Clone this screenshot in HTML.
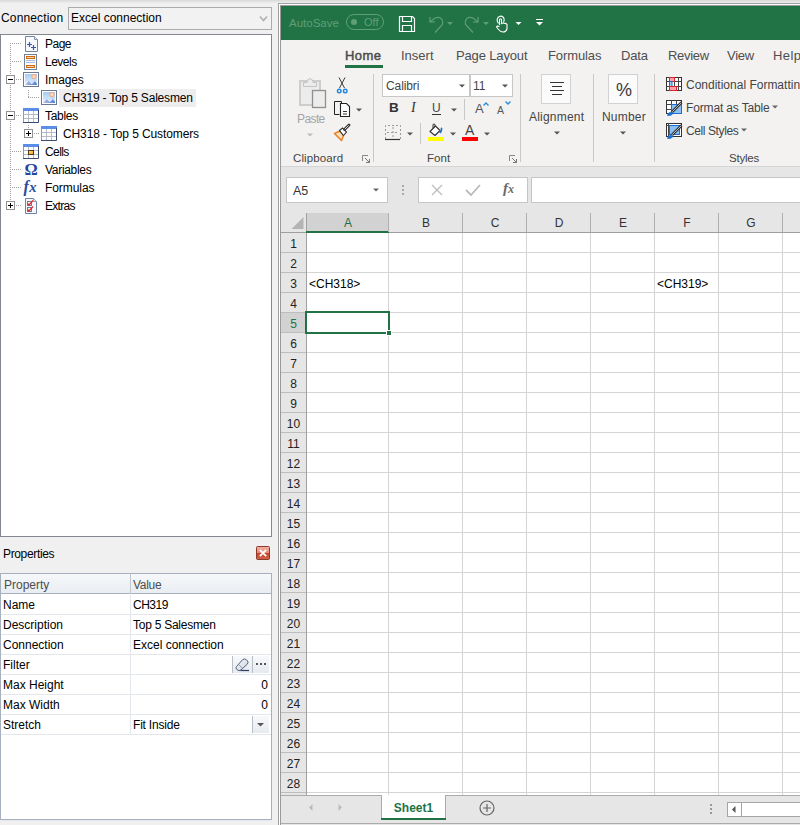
<!DOCTYPE html>
<html><head><meta charset="utf-8">
<style>
*{box-sizing:border-box;margin:0;padding:0}
html,body{width:800px;height:825px;overflow:hidden;background:#f0f0f0;font-family:"Liberation Sans",sans-serif;font-size:12px;color:#000;position:relative}
.a{position:absolute}
.t{position:absolute;white-space:nowrap;line-height:14px}
</style></head><body>
<!-- top gradient -->
<div class="a" style="left:0;top:0;width:800px;height:3px;background:linear-gradient(#d9d9d9,#ececec)"></div>

<!-- LEFT PANEL -->
<div class="t" style="left:1px;top:11px;letter-spacing:0.15px">Connection</div>
<div class="a" style="left:68px;top:7px;width:204px;height:23px;border:1px solid #acacac;background:#f2f2f2"></div>
<div class="t" style="left:71px;top:11px">Excel connection</div>
<svg class="a" style="left:259px;top:15px" width="10" height="8"><path d="M1 1.5L4.5 5.5L8 1.5" fill="none" stroke="#b0b0b0" stroke-width="1.6"/></svg>

<!-- tree -->
<div id="tree" class="a" style="left:0;top:34px;width:272px;height:503px;border:1px solid #828790;background:#fff"></div>

<div class="a" style="left:59px;top:89px;width:137px;height:18px;background:#ededed"></div>
<svg class="a" style="left:0;top:0" width="272" height="230"><line x1="10.5" y1="43" x2="10.5" y2="206" stroke="#a0a0a0" stroke-dasharray="1 1"/><line x1="28.5" y1="90" x2="28.5" y2="98" stroke="#a0a0a0" stroke-dasharray="1 1"/><line x1="28.5" y1="125" x2="28.5" y2="129" stroke="#a0a0a0" stroke-dasharray="1 1"/><line x1="10" y1="43.5" x2="21" y2="43.5" stroke="#a0a0a0" stroke-dasharray="1 1"/><g transform="translate(23,36)">
<path d="M2.5 0.5H11.5L14.5 3.5V15.5H2.5Z" fill="#f7f9fd" stroke="#71849f"/>
<path d="M11.5 0.5V3.5H14.5" fill="#dfe6f2" stroke="#8596b0"/>
<path d="M4 8.5H9M6.5 6V11M8 11.5H13M10.5 9V14" stroke="#3b58a8" stroke-width="1.2"/>
</g><line x1="10" y1="61.5" x2="21" y2="61.5" stroke="#a0a0a0" stroke-dasharray="1 1"/><g transform="translate(23,54)">
<rect x="1.5" y="0.5" width="12" height="15" fill="#f8fafd" stroke="#738299"/>
<rect x="3.5" y="2.5" width="8" height="2" fill="#f7d5a8" stroke="#d06a10" stroke-width="1"/>
<path d="M3 6.5H12M3 8.5H12" stroke="#aebbd8"/>
<rect x="3.5" y="11.5" width="8" height="2" fill="#f7d5a8" stroke="#d06a10" stroke-width="1"/>
</g><line x1="10" y1="79.5" x2="21" y2="79.5" stroke="#a0a0a0" stroke-dasharray="1 1"/><rect x="6.5" y="75.5" width="8" height="8" fill="#fff" stroke="#919191"/><path d="M8 79.5H13" stroke="#000"/><g transform="translate(23,72)">
<defs><linearGradient id="sky2372" x1="0" y1="0" x2="0" y2="1"><stop offset="0" stop-color="#a3cdf6"/><stop offset="1" stop-color="#e6f2fd"/></linearGradient>
<linearGradient id="mt2372" x1="0" y1="0" x2="1" y2="0"><stop offset="0" stop-color="#b5c3e6"/><stop offset="1" stop-color="#4f7ad6"/></linearGradient></defs>
<rect x="0.5" y="0.5" width="15" height="14" fill="#fff" stroke="#6a7a92"/>
<rect x="2" y="2" width="12" height="11" fill="url(#sky2372)"/>
<circle cx="11" cy="4.6" r="2.2" fill="#ffdcbc" stroke="#f8a27c" stroke-width="1"/>
<path d="M2 13L5 8.5L8.5 12L11.5 8.5L14 12V13Z" fill="url(#mt2372)"/>
<path d="M2.3 12.3L5 8.8M9 11.6L11.5 9" stroke="#fff" stroke-width="0.9"/>
</g><line x1="28" y1="97.5" x2="39" y2="97.5" stroke="#a0a0a0" stroke-dasharray="1 1"/><g transform="translate(41,90)">
<defs><linearGradient id="sky4190" x1="0" y1="0" x2="0" y2="1"><stop offset="0" stop-color="#a3cdf6"/><stop offset="1" stop-color="#e6f2fd"/></linearGradient>
<linearGradient id="mt4190" x1="0" y1="0" x2="1" y2="0"><stop offset="0" stop-color="#b5c3e6"/><stop offset="1" stop-color="#4f7ad6"/></linearGradient></defs>
<rect x="0.5" y="0.5" width="15" height="14" fill="#fff" stroke="#6a7a92"/>
<rect x="2" y="2" width="12" height="11" fill="url(#sky4190)"/>
<circle cx="11" cy="4.6" r="2.2" fill="#ffdcbc" stroke="#f8a27c" stroke-width="1"/>
<path d="M2 13L5 8.5L8.5 12L11.5 8.5L14 12V13Z" fill="url(#mt4190)"/>
<path d="M2.3 12.3L5 8.8M9 11.6L11.5 9" stroke="#fff" stroke-width="0.9"/>
</g><line x1="10" y1="115.5" x2="21" y2="115.5" stroke="#a0a0a0" stroke-dasharray="1 1"/><rect x="6.5" y="111.5" width="8" height="8" fill="#fff" stroke="#919191"/><path d="M8 115.5H13" stroke="#000"/><g transform="translate(23,108)">
<rect x="0.5" y="0.5" width="15" height="14" fill="#fff"/>
<path d="M1 6.5H15M1 10.5H15M5.5 3V14.5M10.5 3V14.5" stroke="#b4bcc8"/>
<rect x="0" y="0" width="16" height="3" fill="#5a8ee8"/>
<path d="M0.5 3V14.5" stroke="#8c9cb4"/>
<path d="M15.5 2V14.5H0" fill="none" stroke="#3a4c72"/>
</g><line x1="28" y1="133.5" x2="39" y2="133.5" stroke="#a0a0a0" stroke-dasharray="1 1"/><rect x="24.5" y="129.5" width="8" height="8" fill="#fff" stroke="#919191"/><path d="M26 133.5H31" stroke="#000"/><path d="M28.5 131V136" stroke="#000"/><g transform="translate(41,126)">
<rect x="0.5" y="0.5" width="15" height="14" fill="#fff"/>
<path d="M1 6.5H15M1 10.5H15M5.5 3V14.5M10.5 3V14.5" stroke="#b4bcc8"/>
<rect x="0" y="0" width="16" height="3" fill="#5a8ee8"/>
<path d="M0.5 3V14.5" stroke="#8c9cb4"/>
<path d="M15.5 2V14.5H0" fill="none" stroke="#3a4c72"/>
</g><line x1="10" y1="151.5" x2="21" y2="151.5" stroke="#a0a0a0" stroke-dasharray="1 1"/><g transform="translate(23,144)">
<rect x="0.5" y="0.5" width="15" height="14" fill="#fff"/>
<path d="M1 6.5H15M1 10.5H15M5.5 3V14.5M10.5 3V14.5" stroke="#b4bcc8"/>
<rect x="0" y="0" width="16" height="3" fill="#5a8ee8"/>
<path d="M0.5 3V14.5" stroke="#8c9cb4"/>
<path d="M15.5 2V14.5H0" fill="none" stroke="#3a4c72"/>
<defs><linearGradient id="cy" x1="0" y1="0" x2="1" y2="1"><stop offset="0" stop-color="#ffe27a"/><stop offset="1" stop-color="#f39a1e"/></linearGradient></defs><rect x="5.5" y="6.5" width="5" height="4" fill="url(#cy)" stroke="#4a3a18"/></g><line x1="10" y1="169.5" x2="21" y2="169.5" stroke="#a0a0a0" stroke-dasharray="1 1"/><text x="24.6" y="175" font-family="Liberation Serif" font-size="16.5" font-weight="bold" fill="#26479a" transform="translate(24.6,175) scale(1,0.95) translate(-24.6,-175)">&#937;</text><line x1="10" y1="187.5" x2="21" y2="187.5" stroke="#a0a0a0" stroke-dasharray="1 1"/><text x="23.5" y="192" font-family="Liberation Serif" font-size="16" font-style="italic" font-weight="bold" fill="#2a4c9c">f<tspan font-size="14.5" dx="0.5">x</tspan></text><line x1="10" y1="205.5" x2="21" y2="205.5" stroke="#a0a0a0" stroke-dasharray="1 1"/><rect x="6.5" y="201.5" width="8" height="8" fill="#fff" stroke="#919191"/><path d="M8 205.5H13" stroke="#000"/><path d="M10.5 203V208" stroke="#000"/><g transform="translate(23,198)">
<path d="M2.5 0.5H10.5L13.5 3.5V15.5H2.5Z" fill="#f4f7fc" stroke="#6d83a8"/>
<path d="M10.5 0.5V3.5H13.5" fill="#dfe6f2" stroke="#8fa1c0"/>
<rect x="4.5" y="3.5" width="4" height="4" fill="#fff" stroke="#6d7d99"/>
<rect x="4.5" y="9.5" width="4" height="4" fill="#fff" stroke="#6d7d99"/>
<path d="M4.5 5.5L6 7L10 2.5M4.5 11.5L6 13L10 8.5" stroke="#e0302a" stroke-width="1.3" fill="none"/>
</g></svg>
<div class="t" style="left:45px;top:37px;letter-spacing:-0.5px">Page</div>
<div class="t" style="left:45px;top:55px;letter-spacing:-0.5px">Levels</div>
<div class="t" style="left:45px;top:73px;letter-spacing:-0.1px">Images</div>
<div class="t" style="left:63px;top:91px;letter-spacing:-0.19px">CH319 - Top 5 Salesmen</div>
<div class="t" style="left:45px;top:109px;letter-spacing:-0.3px">Tables</div>
<div class="t" style="left:63px;top:127px;letter-spacing:-0.11px">CH318 - Top 5 Customers</div>
<div class="t" style="left:45px;top:145px;letter-spacing:-0.6px">Cells</div>
<div class="t" style="left:45px;top:163px;letter-spacing:-0.3px">Variables</div>
<div class="t" style="left:45px;top:181px;letter-spacing:-0.07px">Formulas</div>
<div class="t" style="left:45px;top:199px;letter-spacing:-0.7px">Extras</div>


<!-- properties grid -->
<div class="t" style="left:3px;top:547px;letter-spacing:-0.35px">Properties</div>
<svg class="a" style="left:256px;top:546px" width="14" height="14">
<defs><linearGradient id="cg" x1="0" y1="0" x2="0" y2="1"><stop offset="0" stop-color="#f2b0a4"/><stop offset="0.48" stop-color="#e48a78"/><stop offset="0.52" stop-color="#c9462c"/><stop offset="1" stop-color="#d2604a"/></linearGradient></defs>
<rect x="0.5" y="0.5" width="13" height="13" rx="1" fill="url(#cg)" stroke="#8a3b2e"/>
<path d="M3.8 3.8L10.2 10.2M10.2 3.8L3.8 10.2" stroke="#fff" stroke-width="1.7"/>
</svg>
<div class="a" style="left:0;top:573px;width:272px;height:247px;border:1px solid #a7b0bd;border-top-color:#a7b0bd;background:#fff"></div>
<div class="a" style="left:1px;top:574px;width:270px;height:20px;background:linear-gradient(#f6f8fa,#e9edf2);border-bottom:1px solid #a7b0bd"></div>
<div class="a" style="left:130px;top:574px;width:1px;height:20px;background:#c2c8d0"></div>
<div class="t" style="left:4px;top:578px;color:#4d4d4d">Property</div>
<div class="t" style="left:133px;top:578px;color:#4d4d4d;letter-spacing:-0.3px">Value</div>
<div class="a" style="left:1px;top:614px;width:270px;height:1px;background:#e3e6ea"></div>
<div class="a" style="left:130px;top:595px;width:1px;height:20px;background:#e3e6ea"></div>
<div class="t" style="left:3px;top:598px">Name</div>
<div class="t" style="left:133px;top:598px;letter-spacing:-0.5px">CH319</div>
<div class="a" style="left:1px;top:634px;width:270px;height:1px;background:#e3e6ea"></div>
<div class="a" style="left:130px;top:615px;width:1px;height:20px;background:#e3e6ea"></div>
<div class="t" style="left:3px;top:618px">Description</div>
<div class="t" style="left:133px;top:618px;letter-spacing:-0.25px">Top 5 Salesmen</div>
<div class="a" style="left:1px;top:654px;width:270px;height:1px;background:#e3e6ea"></div>
<div class="a" style="left:130px;top:635px;width:1px;height:20px;background:#e3e6ea"></div>
<div class="t" style="left:3px;top:638px">Connection</div>
<div class="t" style="left:133px;top:638px;letter-spacing:0px">Excel connection</div>
<div class="a" style="left:1px;top:674px;width:270px;height:1px;background:#e3e6ea"></div>
<div class="a" style="left:130px;top:655px;width:1px;height:20px;background:#e3e6ea"></div>
<div class="t" style="left:3px;top:658px">Filter</div>
<div class="a" style="left:1px;top:694px;width:270px;height:1px;background:#e3e6ea"></div>
<div class="a" style="left:130px;top:675px;width:1px;height:20px;background:#e3e6ea"></div>
<div class="t" style="left:3px;top:678px">Max Height</div>
<div class="t" style="left:200px;width:68px;text-align:right;top:678px">0</div>
<div class="a" style="left:1px;top:714px;width:270px;height:1px;background:#e3e6ea"></div>
<div class="a" style="left:130px;top:695px;width:1px;height:20px;background:#e3e6ea"></div>
<div class="t" style="left:3px;top:698px">Max Width</div>
<div class="t" style="left:200px;width:68px;text-align:right;top:698px">0</div>
<div class="a" style="left:1px;top:734px;width:270px;height:1px;background:#e3e6ea"></div>
<div class="a" style="left:130px;top:715px;width:1px;height:20px;background:#e3e6ea"></div>
<div class="t" style="left:3px;top:718px">Stretch</div>
<div class="t" style="left:133px;top:718px;letter-spacing:-0.2px">Fit Inside</div>
<div class="a" style="left:232px;top:656px;width:37px;height:17px;background:linear-gradient(#f8f9fb,#e6eaef)"></div>
<div class="a" style="left:232px;top:656px;width:1px;height:17px;background:#b8bec6"></div>
<div class="a" style="left:252px;top:656px;width:1px;height:17px;background:#b8bec6"></div>
<svg class="a" style="left:234px;top:657px" width="17" height="15">
<defs><linearGradient id="er" x1="0" y1="0" x2="1" y2="1"><stop offset="0" stop-color="#fbfcfd"/><stop offset="1" stop-color="#c8d0dc"/></linearGradient></defs>
<path d="M2.5 9.5L8.5 2.8Q10.5 1 12.5 2.8L13.2 3.5Q15 5.5 13.2 7.3L7 13Q5 14.5 3.2 12.8L2.8 12.3Q1.2 10.8 2.5 9.5Z" fill="url(#er)" stroke="#505e7a"/>
<path d="M4.5 7.5L8.8 11.5" stroke="#7a869c" stroke-width="0.8"/>
<path d="M6.5 13.5H15" stroke="#2e3e66" stroke-width="1.2"/>
</svg>
<div class="a" style="left:256px;top:663px;width:2px;height:2px;background:#555"></div>
<div class="a" style="left:260px;top:663px;width:2px;height:2px;background:#555"></div>
<div class="a" style="left:264px;top:663px;width:2px;height:2px;background:#555"></div>

<div class="a" style="left:252px;top:716px;width:17px;height:17px;background:linear-gradient(#f8f9fb,#e6eaef);border-left:1px solid #b8bec6"></div>
<svg class="a" style="left:252px;top:716px" width="17" height="17"><path d="M5 7H12L8.5 10.5Z" fill="#555"/></svg>
<div class="a" style="left:0;top:820px;width:272px;height:1px;background:#e4e8ee"></div>

<!-- RIGHT: EXCEL -->
<div class="a" style="left:278px;top:3px;width:522px;height:822px;border-left:1px solid #a0a0a0;border-top:1px solid #a0a0a0;background:#fff"></div>
<div class="a" style="left:280px;top:5px;width:520px;height:820px;border-left:1px solid #9a9a9a;border-top:1px solid #9a9a9a;background:#f3f2f1"></div>
<div class="a" style="left:281px;top:6px;width:519px;height:34px;background:#217346"></div>
<div class="t" style="left:289px;top:16px;font-size:11.5px;color:#5f9f78">AutoSave</div>
<div class="a" style="left:346px;top:14px;width:38px;height:16px;border:1px solid #5f9f78;border-radius:8px"></div>
<div class="a" style="left:351px;top:19px;width:6px;height:6px;border-radius:3px;background:#5f9f78"></div>
<div class="t" style="left:364px;top:15px;font-size:11px;color:#5f9f78">Off</div>
<svg class="a" style="left:398px;top:15px" width="18" height="18">
<path d="M1.5 1.5H14.5L16.5 3.5V16.5H1.5Z" fill="none" stroke="#fff" stroke-width="1.2"/>
<path d="M4.5 1.5V6.5H13.5V1.5" fill="none" stroke="#fff" stroke-width="1.2"/>
<path d="M4.5 16.5V10.5H13.5V16.5" fill="none" stroke="#fff" stroke-width="1.2"/>
</svg>
<svg class="a" style="left:426px;top:14px" width="30" height="20">
<path d="M4 3V8H9" fill="none" stroke="#5f9f78" stroke-width="1.2"/>
<path d="M4.5 8Q9 2.5 13.5 3.5Q17.5 5.5 16.5 10.5L9 18.5" fill="none" stroke="#5f9f78" stroke-width="1.2"/>
<path d="M21 8H27L24 11Z" fill="#5f9f78"/>
</svg>
<svg class="a" style="left:462px;top:14px" width="30" height="20">
<path d="M16 3V8H11" fill="none" stroke="#5f9f78" stroke-width="1.2"/>
<path d="M15.5 8Q11 2.5 6.5 3.5Q2.5 5.5 3.5 10.5L11 18.5" fill="none" stroke="#5f9f78" stroke-width="1.2"/>
<path d="M21 8H27L24 11Z" fill="#5f9f78"/>
</svg>
<svg class="a" style="left:494px;top:14px" width="30" height="20">
<path d="M4.5 9.5Q2 6 4 3.5Q6.5 1 9 3Q11 5 9.5 8.5" fill="none" stroke="#fff" stroke-width="1.1"/>
<path d="M5.5 11V5.5Q6.5 4 7.5 5.5V9.5Q9 8.5 10.5 9.5Q12 9 13 10.5V15Q12 18 9 18Q6.5 18 4.5 15.5L2.5 13Q3 11.5 5.5 12.5" fill="none" stroke="#fff" stroke-width="1.1"/>
<path d="M21.5 8H27.5L24.5 11Z" fill="#fff"/>
</svg>
<svg class="a" style="left:534px;top:16px" width="12" height="14">
<path d="M2 3.5H9" stroke="#fff" stroke-width="1"/>
<path d="M2 6H9L5.5 9.5Z" fill="#fff"/>
</svg>
<div class="t" style="left:345px;top:48px;font-size:13px;line-height:15px;color:#4a4a4a;letter-spacing:0.4px;-webkit-text-stroke:0.45px #4a4a4a;">Home</div>
<div class="t" style="left:401px;top:48px;font-size:13px;line-height:15px;color:#4e4e4e;letter-spacing:0px;">Insert</div>
<div class="t" style="left:456px;top:48px;font-size:13px;line-height:15px;color:#4e4e4e;letter-spacing:-0.15px;">Page Layout</div>
<div class="t" style="left:548px;top:48px;font-size:13px;line-height:15px;color:#4e4e4e;letter-spacing:-0.1px;">Formulas</div>
<div class="t" style="left:621px;top:48px;font-size:13px;line-height:15px;color:#4e4e4e;letter-spacing:-0.2px;">Data</div>
<div class="t" style="left:668px;top:48px;font-size:13px;line-height:15px;color:#4e4e4e;letter-spacing:-0.3px;">Review</div>
<div class="t" style="left:727px;top:48px;font-size:13px;line-height:15px;color:#4e4e4e;letter-spacing:-0.3px;">View</div>
<div class="t" style="left:773px;top:48px;font-size:13px;line-height:15px;color:#4e4e4e;letter-spacing:0.4px;">Help</div>
<div class="a" style="left:345px;top:65px;width:38px;height:3px;background:#217346"></div>
<div class="a" style="left:373px;top:74px;width:1px;height:88px;background:#c8c8c8"></div>
<div class="a" style="left:520px;top:74px;width:1px;height:88px;background:#c8c8c8"></div>
<div class="a" style="left:593px;top:74px;width:1px;height:88px;background:#c8c8c8"></div>
<div class="a" style="left:654px;top:74px;width:1px;height:88px;background:#c8c8c8"></div>
<div class="a" style="left:281px;top:166px;width:519px;height:1px;background:#d4d4d4"></div>
<div class="t" style="left:293px;top:151px;font-size:11.5px;color:#444;letter-spacing:0.1px">Clipboard</div>
<div class="t" style="left:427px;top:151px;font-size:11.5px;color:#444;letter-spacing:0.1px">Font</div>
<div class="t" style="left:729px;top:151px;font-size:11.5px;color:#444;letter-spacing:-0.2px">Styles</div>
<svg class="a" style="left:362px;top:155px" width="9" height="9"><path d="M0.5 6V0.5H6" fill="none" stroke="#888"/><path d="M3 3L7.5 7.5M4 7.5H7.5V4" fill="none" stroke="#777"/></svg>
<svg class="a" style="left:509px;top:155px" width="9" height="9"><path d="M0.5 6V0.5H6" fill="none" stroke="#888"/><path d="M3 3L7.5 7.5M4 7.5H7.5V4" fill="none" stroke="#777"/></svg>
<svg class="a" style="left:298px;top:77px" width="30" height="32">
<rect x="2" y="4" width="20" height="24" fill="#ececec" stroke="#cdcdcd" stroke-width="2"/>
<path d="M5.5 9.5V5.5H9Q9 2 12 1.5Q15 2 15 5.5H18.5V9.5Z" fill="#ececec" stroke="#c4c4c4"/>
<rect x="14.5" y="13.5" width="13" height="17" fill="#ececec" stroke="#8f8f8f" stroke-width="1.3"/>
</svg>
<div class="t" style="left:297px;top:112px;color:#a5a5a5;letter-spacing:-0.6px">Paste</div>
<svg class="a" style="left:307px;top:133px" width="6" height="4"><path d="M0 0.5H6L3.0 3.5Z" fill="#bbb"/></svg>
<svg class="a" style="left:335px;top:76px" width="14" height="18">
<path d="M4 1.5L9.5 12M10 1.5L4.5 12" stroke="#3a3a3a" stroke-width="1"/>
<circle cx="4.2" cy="15" r="1.8" fill="none" stroke="#1e88e0" stroke-width="1.4"/>
<circle cx="10.2" cy="15" r="1.8" fill="none" stroke="#1e88e0" stroke-width="1.4"/>
</svg>
<svg class="a" style="left:333px;top:100px" width="30" height="19">
<path d="M8.5 3.5V1.5H1.5V14.5H6.5" fill="none" stroke="#222" stroke-width="1"/>
<path d="M7.5 3.5H13.5L16.5 6.5V16.5H7.5Z" fill="#fff" stroke="#222" stroke-width="1.1"/>
<path d="M10 11.5H14M10 14H14" stroke="#333"/>
</svg>
<svg class="a" style="left:356px;top:108px" width="6" height="4"><path d="M0 0.5H6L3.0 3.5Z" fill="#555"/></svg>
<svg class="a" style="left:333px;top:123px" width="18" height="19">
<path d="M1.5 10.5L7 8L10.5 12.5L8.5 17.5Z" fill="#fbe0c0" stroke="#e8832a" stroke-width="1.6" stroke-linejoin="round"/>
<path d="M6.5 7.5L9.5 5L13.5 9L10.5 12.5Z" fill="#fff" stroke="#333" stroke-width="1.1"/>
<path d="M11.5 6.5L16 2" stroke="#333" stroke-width="2.8" stroke-linecap="round"/>
<path d="M11.8 6.2L15.6 2.4" stroke="#f3f2f1" stroke-width="0.9"/>
</svg>
<div class="a" style="left:382px;top:74px;width:88px;height:23px;background:#fff;border:1px solid #c6c6c6"></div>
<div class="a" style="left:470px;top:74px;width:43px;height:23px;background:#fff;border:1px solid #c6c6c6"></div>
<div class="t" style="left:386px;top:79px;color:#444;letter-spacing:-0.1px">Calibri</div>
<div class="t" style="left:473px;top:79px;color:#444">11</div>
<svg class="a" style="left:459px;top:84px" width="6" height="4"><path d="M0 0.5H6L3.0 3.5Z" fill="#555"/></svg>
<svg class="a" style="left:502px;top:84px" width="6" height="4"><path d="M0 0.5H6L3.0 3.5Z" fill="#555"/></svg>
<div class="t" style="left:389px;top:101px;font-weight:bold;font-size:13.5px;color:#333">B</div>
<div class="t" style="left:411px;top:101px;font-style:italic;font-size:14px;color:#333;font-family:'Liberation Serif'">I</div>
<div class="t" style="left:432px;top:101px;font-size:12px;color:#444">U</div>
<div class="a" style="left:432px;top:114px;width:9px;height:1px;background:#333"></div>
<svg class="a" style="left:451px;top:108px" width="6" height="4"><path d="M0 0.5H6L3.0 3.5Z" fill="#555"/></svg>
<div class="a" style="left:464px;top:99px;width:1px;height:21px;background:#c8c8c8"></div>
<div class="t" style="left:475px;top:102px;font-size:13px;color:#555">A</div>
<svg class="a" style="left:483px;top:102px" width="6" height="4"><path d="M0.5 3.5L3 1L5.5 3.5" fill="none" stroke="#2a8ad8" stroke-width="1.3"/></svg>
<div class="t" style="left:497px;top:103px;font-size:10.5px;color:#555">A</div>
<svg class="a" style="left:505px;top:101px" width="6" height="4"><path d="M0.5 0.5L3 3L5.5 0.5" fill="none" stroke="#2a8ad8" stroke-width="1.3"/></svg>
<svg class="a" style="left:385px;top:125px" width="16" height="16">
<path d="M0.5 14V0.5H15.5V14" fill="none" stroke="#9a9a9a" stroke-dasharray="2 2"/>
<path d="M8 2V13M2 7.5H14" stroke="#9a9a9a" stroke-dasharray="2 2"/>
<path d="M0 14.5H15" stroke="#333" stroke-width="1.2"/>
</svg>
<svg class="a" style="left:407px;top:132px" width="6" height="4"><path d="M0 0.5H6L3.0 3.5Z" fill="#555"/></svg>
<div class="a" style="left:420px;top:123px;width:1px;height:21px;background:#c8c8c8"></div>
<svg class="a" style="left:428px;top:123px" width="16" height="18">
<path d="M2 8.5L7.5 3L12 7.5L7 12.5Z" fill="#fff" stroke="#333" stroke-width="1.1" stroke-linejoin="round"/>
<path d="M5 5.5V1.5Q6 0.5 7 1.5V4" fill="none" stroke="#333" stroke-width="1"/>
<path d="M12 10Q14.5 6 13 5" fill="none" stroke="#1e6fc0" stroke-width="1.8"/>
<rect x="0" y="14" width="16" height="4" fill="#ffff00"/>
</svg>
<svg class="a" style="left:450px;top:132px" width="6" height="4"><path d="M0 0.5H6L3.0 3.5Z" fill="#555"/></svg>
<div class="t" style="left:465px;top:123px;font-size:14px;color:#444">A</div>
<div class="a" style="left:462px;top:137px;width:16px;height:4px;background:#ff0000"></div>
<svg class="a" style="left:484px;top:132px" width="6" height="4"><path d="M0 0.5H6L3.0 3.5Z" fill="#555"/></svg>
<div class="a" style="left:541px;top:74px;width:30px;height:30px;background:#fbfbfb;border:1px solid #d2d2d2"></div>
<svg class="a" style="left:541px;top:74px" width="30" height="30"><path d="M9 8.5H23M11 12.5H21M9 16.5H23M11 20.5H21" stroke="#333"/></svg>
<div class="t" style="left:529px;top:110px;color:#444;letter-spacing:0.2px">Alignment</div>
<svg class="a" style="left:554px;top:131px" width="6" height="4"><path d="M0 0.5H6L3.0 3.5Z" fill="#555"/></svg>
<div class="a" style="left:608px;top:74px;width:30px;height:30px;background:#fbfbfb;border:1px solid #d2d2d2"></div>
<div class="t" style="left:616px;top:80px;font-size:18px;line-height:20px;color:#3a3a3a">%</div>
<div class="t" style="left:602px;top:110px;color:#444;letter-spacing:0.2px">Number</div>
<svg class="a" style="left:620px;top:131px" width="6" height="4"><path d="M0 0.5H6L3.0 3.5Z" fill="#555"/></svg>
<svg class="a" style="left:666px;top:77px" width="17" height="15">
<rect x="0.5" y="0.5" width="15" height="13" fill="#fff" stroke="#333"/>
<path d="M0.5 4.5H15.5M0.5 9.5H15.5M3.5 0.5V13.5M8.5 0.5V13.5M12.5 0.5V13.5" stroke="#444" stroke-width="1"/>
<rect x="3.5" y="0.5" width="5" height="4" fill="#f7a3ad" stroke="#e0242a"/>
<rect x="3.5" y="4.5" width="2.5" height="5" fill="#9ccaf5" stroke="#1a6fd0"/>
<rect x="3.5" y="9.5" width="7" height="4" fill="#f7a3ad" stroke="#e0242a"/>
</svg>
<svg class="a" style="left:666px;top:100px" width="18" height="17">
<rect x="0.5" y="0.5" width="15" height="13" fill="#fff" stroke="#333"/>
<path d="M0.5 4.5H15.5M0.5 9.5H15.5M5.5 0.5V13.5M10.5 0.5V13.5" stroke="#444"/>
<rect x="5.5" y="4.5" width="10" height="9" fill="#8cc0f2" stroke="#1a6fd0"/>
<path d="M6 12L15.5 2.5" stroke="#333" stroke-width="2.6"/>
<path d="M6.3 11.7L15.2 2.8" stroke="#ddd" stroke-width="0.8"/>
<path d="M1.5 15.5Q2 12.5 5 12L7 13.5Q5.5 16 1.5 15.5Z" fill="#1a6fd0" stroke="#1a6fd0" stroke-width="0.8"/>
</svg>
<svg class="a" style="left:666px;top:123px" width="18" height="17">
<rect x="0.5" y="0.5" width="15" height="13" fill="#fff" stroke="#333"/>
<path d="M0.5 2.5H15.5M2.5 0.5V13.5" stroke="#444"/>
<rect x="3.5" y="2.5" width="10" height="9" fill="#8cc0f2" stroke="#1a6fd0"/>
<path d="M6 12L15.5 2.5" stroke="#333" stroke-width="2.6"/>
<path d="M6.3 11.7L15.2 2.8" stroke="#ddd" stroke-width="0.8"/>
<path d="M1.5 15.5Q2 12.5 5 12L7 13.5Q5.5 16 1.5 15.5Z" fill="#1a6fd0" stroke="#1a6fd0" stroke-width="0.8"/>
</svg>
<div class="t" style="left:686px;top:78px;color:#444">Conditional Formatting</div>
<div class="t" style="left:686px;top:101px;color:#444;letter-spacing:-0.15px">Format as Table</div>
<div class="t" style="left:686px;top:124px;color:#444;letter-spacing:-0.4px">Cell Styles</div>
<svg class="a" style="left:772px;top:105px" width="6" height="4"><path d="M0 0.5H6L3.0 3.5Z" fill="#666"/></svg>
<svg class="a" style="left:741px;top:128px" width="6" height="4"><path d="M0 0.5H6L3.0 3.5Z" fill="#666"/></svg>
<div class="a" style="left:281px;top:167px;width:519px;height:46px;background:#e6e6e6"></div>
<div class="a" style="left:286px;top:177px;width:102px;height:26px;background:#fff;border:1px solid #c6c6c6"></div>
<div class="t" style="left:293px;top:184px;font-size:12.5px;color:#333">A5</div>
<svg class="a" style="left:373px;top:188px" width="6" height="4"><path d="M0 0.5H6L3.0 3.5Z" fill="#666"/></svg>
<div class="a" style="left:402px;top:185px;width:2px;height:2px;background:#aaa"></div>
<div class="a" style="left:402px;top:189px;width:2px;height:2px;background:#aaa"></div>
<div class="a" style="left:402px;top:193px;width:2px;height:2px;background:#aaa"></div>
<div class="a" style="left:418px;top:177px;width:110px;height:26px;background:#fff;border:1px solid #c6c6c6"></div>
<svg class="a" style="left:431px;top:184px" width="12" height="12"><path d="M1 1L11 11M11 1L1 11" stroke="#bdbdbd" stroke-width="1.3"/></svg>
<svg class="a" style="left:465px;top:184px" width="16" height="12"><path d="M1 6L6 11L15 1" fill="none" stroke="#bbb" stroke-width="1.8"/></svg>
<div class="t" style="left:503px;top:181px;font-family:'Liberation Serif';font-style:italic;font-weight:bold;font-size:15px;color:#6a6a6a">f<span style="font-size:12px">x</span></div>
<div class="a" style="left:531px;top:177px;width:269px;height:26px;background:#fff;border:1px solid #c6c6c6;border-right:none"></div>
<div class="a" style="left:281px;top:213px;width:519px;height:582px;background:#fff"></div>
<div class="a" style="left:281px;top:213px;width:519px;height:19px;background:#e6e6e6"></div>
<div class="a" style="left:281px;top:232px;width:519px;height:1px;background:#9e9e9e"></div>
<div class="a" style="left:281px;top:233px;width:25px;height:562px;background:#e6e6e6"></div>
<div class="a" style="left:306px;top:213px;width:1px;height:582px;background:#a0a0a0"></div>
<svg class="a" style="left:290px;top:216px" width="15" height="14"><path d="M13.5 1V13H1.5Z" fill="#b4b4b4"/></svg>
<div class="a" style="left:307px;top:213px;width:81px;height:18px;background:#d2d2d2"></div>
<div class="a" style="left:306px;top:231px;width:83px;height:2px;background:#217346"></div>
<div class="a" style="left:388px;top:213px;width:1px;height:19px;background:#b0b0b0"></div>
<div class="a" style="left:388px;top:233px;width:1px;height:562px;background:#d4d4d4"></div>
<div class="t" style="left:307px;width:82px;text-align:center;top:216px;color:#1f6b43">A</div>
<div class="a" style="left:462px;top:213px;width:1px;height:19px;background:#b0b0b0"></div>
<div class="a" style="left:462px;top:233px;width:1px;height:562px;background:#d4d4d4"></div>
<div class="t" style="left:389px;width:74px;text-align:center;top:216px;color:#333">B</div>
<div class="a" style="left:526px;top:213px;width:1px;height:19px;background:#b0b0b0"></div>
<div class="a" style="left:526px;top:233px;width:1px;height:562px;background:#d4d4d4"></div>
<div class="t" style="left:463px;width:64px;text-align:center;top:216px;color:#333">C</div>
<div class="a" style="left:590px;top:213px;width:1px;height:19px;background:#b0b0b0"></div>
<div class="a" style="left:590px;top:233px;width:1px;height:562px;background:#d4d4d4"></div>
<div class="t" style="left:527px;width:64px;text-align:center;top:216px;color:#333">D</div>
<div class="a" style="left:654px;top:213px;width:1px;height:19px;background:#b0b0b0"></div>
<div class="a" style="left:654px;top:233px;width:1px;height:562px;background:#d4d4d4"></div>
<div class="t" style="left:591px;width:64px;text-align:center;top:216px;color:#333">E</div>
<div class="a" style="left:718px;top:213px;width:1px;height:19px;background:#b0b0b0"></div>
<div class="a" style="left:718px;top:233px;width:1px;height:562px;background:#d4d4d4"></div>
<div class="t" style="left:655px;width:64px;text-align:center;top:216px;color:#333">F</div>
<div class="a" style="left:782px;top:213px;width:1px;height:19px;background:#b0b0b0"></div>
<div class="a" style="left:782px;top:233px;width:1px;height:562px;background:#d4d4d4"></div>
<div class="t" style="left:719px;width:64px;text-align:center;top:216px;color:#333">G</div>
<div class="a" style="left:846px;top:213px;width:1px;height:19px;background:#b0b0b0"></div>
<div class="a" style="left:846px;top:233px;width:1px;height:562px;background:#d4d4d4"></div>
<div class="a" style="left:307px;top:252px;width:493px;height:1px;background:#d4d4d4"></div>
<div class="a" style="left:281px;top:252px;width:25px;height:1px;background:#bdbdbd"></div>
<div class="t" style="left:281px;width:25px;text-align:center;top:237px;color:#222">1</div>
<div class="a" style="left:307px;top:272px;width:493px;height:1px;background:#d4d4d4"></div>
<div class="a" style="left:281px;top:272px;width:25px;height:1px;background:#bdbdbd"></div>
<div class="t" style="left:281px;width:25px;text-align:center;top:257px;color:#222">2</div>
<div class="a" style="left:307px;top:292px;width:493px;height:1px;background:#d4d4d4"></div>
<div class="a" style="left:281px;top:292px;width:25px;height:1px;background:#bdbdbd"></div>
<div class="t" style="left:281px;width:25px;text-align:center;top:277px;color:#222">3</div>
<div class="a" style="left:307px;top:312px;width:493px;height:1px;background:#d4d4d4"></div>
<div class="a" style="left:281px;top:312px;width:25px;height:1px;background:#bdbdbd"></div>
<div class="t" style="left:281px;width:25px;text-align:center;top:297px;color:#222">4</div>
<div class="a" style="left:307px;top:332px;width:493px;height:1px;background:#d4d4d4"></div>
<div class="a" style="left:281px;top:332px;width:25px;height:1px;background:#bdbdbd"></div>
<div class="a" style="left:307px;top:352px;width:493px;height:1px;background:#d4d4d4"></div>
<div class="a" style="left:281px;top:352px;width:25px;height:1px;background:#bdbdbd"></div>
<div class="t" style="left:281px;width:25px;text-align:center;top:337px;color:#222">6</div>
<div class="a" style="left:307px;top:372px;width:493px;height:1px;background:#d4d4d4"></div>
<div class="a" style="left:281px;top:372px;width:25px;height:1px;background:#bdbdbd"></div>
<div class="t" style="left:281px;width:25px;text-align:center;top:357px;color:#222">7</div>
<div class="a" style="left:307px;top:392px;width:493px;height:1px;background:#d4d4d4"></div>
<div class="a" style="left:281px;top:392px;width:25px;height:1px;background:#bdbdbd"></div>
<div class="t" style="left:281px;width:25px;text-align:center;top:377px;color:#222">8</div>
<div class="a" style="left:307px;top:412px;width:493px;height:1px;background:#d4d4d4"></div>
<div class="a" style="left:281px;top:412px;width:25px;height:1px;background:#bdbdbd"></div>
<div class="t" style="left:281px;width:25px;text-align:center;top:397px;color:#222">9</div>
<div class="a" style="left:307px;top:432px;width:493px;height:1px;background:#d4d4d4"></div>
<div class="a" style="left:281px;top:432px;width:25px;height:1px;background:#bdbdbd"></div>
<div class="t" style="left:281px;width:25px;text-align:center;top:417px;color:#222">10</div>
<div class="a" style="left:307px;top:452px;width:493px;height:1px;background:#d4d4d4"></div>
<div class="a" style="left:281px;top:452px;width:25px;height:1px;background:#bdbdbd"></div>
<div class="t" style="left:281px;width:25px;text-align:center;top:437px;color:#222">11</div>
<div class="a" style="left:307px;top:472px;width:493px;height:1px;background:#d4d4d4"></div>
<div class="a" style="left:281px;top:472px;width:25px;height:1px;background:#bdbdbd"></div>
<div class="t" style="left:281px;width:25px;text-align:center;top:457px;color:#222">12</div>
<div class="a" style="left:307px;top:492px;width:493px;height:1px;background:#d4d4d4"></div>
<div class="a" style="left:281px;top:492px;width:25px;height:1px;background:#bdbdbd"></div>
<div class="t" style="left:281px;width:25px;text-align:center;top:477px;color:#222">13</div>
<div class="a" style="left:307px;top:512px;width:493px;height:1px;background:#d4d4d4"></div>
<div class="a" style="left:281px;top:512px;width:25px;height:1px;background:#bdbdbd"></div>
<div class="t" style="left:281px;width:25px;text-align:center;top:497px;color:#222">14</div>
<div class="a" style="left:307px;top:532px;width:493px;height:1px;background:#d4d4d4"></div>
<div class="a" style="left:281px;top:532px;width:25px;height:1px;background:#bdbdbd"></div>
<div class="t" style="left:281px;width:25px;text-align:center;top:517px;color:#222">15</div>
<div class="a" style="left:307px;top:552px;width:493px;height:1px;background:#d4d4d4"></div>
<div class="a" style="left:281px;top:552px;width:25px;height:1px;background:#bdbdbd"></div>
<div class="t" style="left:281px;width:25px;text-align:center;top:537px;color:#222">16</div>
<div class="a" style="left:307px;top:572px;width:493px;height:1px;background:#d4d4d4"></div>
<div class="a" style="left:281px;top:572px;width:25px;height:1px;background:#bdbdbd"></div>
<div class="t" style="left:281px;width:25px;text-align:center;top:557px;color:#222">17</div>
<div class="a" style="left:307px;top:592px;width:493px;height:1px;background:#d4d4d4"></div>
<div class="a" style="left:281px;top:592px;width:25px;height:1px;background:#bdbdbd"></div>
<div class="t" style="left:281px;width:25px;text-align:center;top:577px;color:#222">18</div>
<div class="a" style="left:307px;top:612px;width:493px;height:1px;background:#d4d4d4"></div>
<div class="a" style="left:281px;top:612px;width:25px;height:1px;background:#bdbdbd"></div>
<div class="t" style="left:281px;width:25px;text-align:center;top:597px;color:#222">19</div>
<div class="a" style="left:307px;top:632px;width:493px;height:1px;background:#d4d4d4"></div>
<div class="a" style="left:281px;top:632px;width:25px;height:1px;background:#bdbdbd"></div>
<div class="t" style="left:281px;width:25px;text-align:center;top:617px;color:#222">20</div>
<div class="a" style="left:307px;top:652px;width:493px;height:1px;background:#d4d4d4"></div>
<div class="a" style="left:281px;top:652px;width:25px;height:1px;background:#bdbdbd"></div>
<div class="t" style="left:281px;width:25px;text-align:center;top:637px;color:#222">21</div>
<div class="a" style="left:307px;top:672px;width:493px;height:1px;background:#d4d4d4"></div>
<div class="a" style="left:281px;top:672px;width:25px;height:1px;background:#bdbdbd"></div>
<div class="t" style="left:281px;width:25px;text-align:center;top:657px;color:#222">22</div>
<div class="a" style="left:307px;top:692px;width:493px;height:1px;background:#d4d4d4"></div>
<div class="a" style="left:281px;top:692px;width:25px;height:1px;background:#bdbdbd"></div>
<div class="t" style="left:281px;width:25px;text-align:center;top:677px;color:#222">23</div>
<div class="a" style="left:307px;top:712px;width:493px;height:1px;background:#d4d4d4"></div>
<div class="a" style="left:281px;top:712px;width:25px;height:1px;background:#bdbdbd"></div>
<div class="t" style="left:281px;width:25px;text-align:center;top:697px;color:#222">24</div>
<div class="a" style="left:307px;top:732px;width:493px;height:1px;background:#d4d4d4"></div>
<div class="a" style="left:281px;top:732px;width:25px;height:1px;background:#bdbdbd"></div>
<div class="t" style="left:281px;width:25px;text-align:center;top:717px;color:#222">25</div>
<div class="a" style="left:307px;top:752px;width:493px;height:1px;background:#d4d4d4"></div>
<div class="a" style="left:281px;top:752px;width:25px;height:1px;background:#bdbdbd"></div>
<div class="t" style="left:281px;width:25px;text-align:center;top:737px;color:#222">26</div>
<div class="a" style="left:307px;top:772px;width:493px;height:1px;background:#d4d4d4"></div>
<div class="a" style="left:281px;top:772px;width:25px;height:1px;background:#bdbdbd"></div>
<div class="t" style="left:281px;width:25px;text-align:center;top:757px;color:#222">27</div>
<div class="a" style="left:307px;top:792px;width:493px;height:1px;background:#d4d4d4"></div>
<div class="a" style="left:281px;top:792px;width:25px;height:1px;background:#bdbdbd"></div>
<div class="t" style="left:281px;width:25px;text-align:center;top:777px;color:#222">28</div>
<div class="a" style="left:307px;top:812px;width:493px;height:1px;background:#d4d4d4"></div>
<div class="a" style="left:281px;top:812px;width:25px;height:1px;background:#bdbdbd"></div>
<div class="a" style="left:281px;top:313px;width:25px;height:19px;background:#d2d2d2"></div>
<div class="t" style="left:281px;width:25px;text-align:center;top:317px;color:#217346">5</div>
<div class="t" style="left:309px;top:277px;color:#000">&lt;CH318&gt;</div>
<div class="t" style="left:657px;top:277px;color:#000">&lt;CH319&gt;</div>
<div class="a" style="left:305px;top:311px;width:85px;height:23px;border:2px solid #217346"></div>
<div class="a" style="left:386px;top:330px;width:6px;height:6px;background:#217346;border:1px solid #fff"></div>
<div class="a" style="left:281px;top:795px;width:519px;height:30px;background:#e6e6e6;border-top:1px solid #ababab"></div>
<div class="a" style="left:281px;top:823px;width:519px;height:1px;background:#ababab"></div>
<svg class="a" style="left:308px;top:803px" width="6" height="9"><path d="M4.5 1V8L1 4.5Z" fill="#bbb"/></svg>
<svg class="a" style="left:337px;top:803px" width="6" height="9"><path d="M1.5 1V8L5 4.5Z" fill="#bbb"/></svg>
<div class="a" style="left:381px;top:795px;width:65px;height:25px;background:#fff;border-left:1px solid #ababab;border-right:1px solid #ababab"></div>
<div class="a" style="left:381px;top:818px;width:65px;height:2px;background:#217346"></div>
<div class="t" style="left:381px;width:65px;text-align:center;top:801px;font-weight:bold;color:#217346">Sheet1</div>
<svg class="a" style="left:479px;top:800px" width="16" height="16"><circle cx="8" cy="8" r="7" fill="none" stroke="#666" stroke-width="1.2"/><path d="M8 4V12M4 8H12" stroke="#666" stroke-width="1.2"/></svg>
<div class="a" style="left:710px;top:804px;width:2px;height:2px;background:#999"></div>
<div class="a" style="left:710px;top:808px;width:2px;height:2px;background:#999"></div>
<div class="a" style="left:710px;top:812px;width:2px;height:2px;background:#999"></div>
<div class="a" style="left:727px;top:802px;width:73px;height:15px;background:#fff;border:1px solid #a5a5a5;border-right:none"></div>
<div class="a" style="left:741px;top:802px;width:1px;height:15px;background:#a5a5a5"></div>
<svg class="a" style="left:731px;top:805px" width="6" height="9"><path d="M4.5 1V8L1 4.5Z" fill="#555"/></svg>


</body></html>
